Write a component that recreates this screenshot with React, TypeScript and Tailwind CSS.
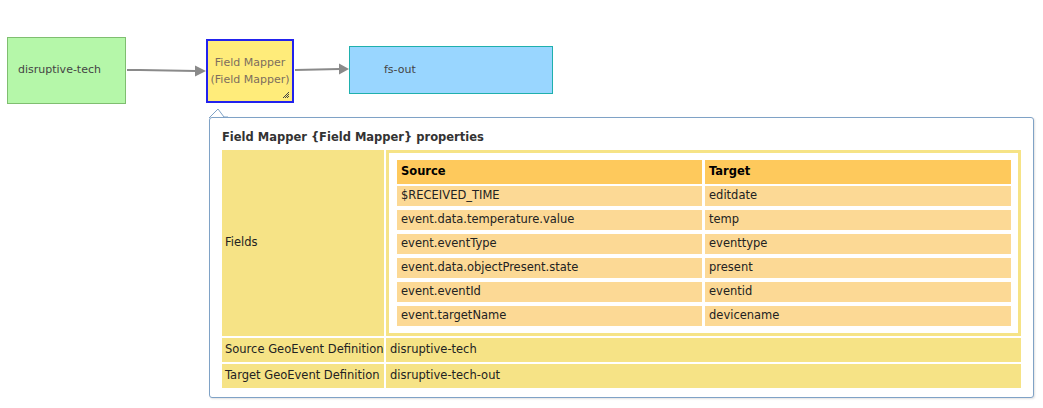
import React from "react";

const rows: [string, string][] = [
  ["$RECEIVED_TIME", "editdate"],
  ["event.data.temperature.value", "temp"],
  ["event.eventType", "eventtype"],
  ["event.data.objectPresent.state", "present"],
  ["event.eventId", "eventid"],
  ["event.targetName", "devicename"],
];

export default function App() {
  return (
    <div
      className="relative w-[1043px] h-[408px] bg-white overflow-hidden text-[11px] text-[#222]"
      style={{ fontFamily: '"DejaVu Sans", Verdana, sans-serif' }}
    >
      {/* arrows */}
      <svg className="absolute left-0 top-0" width="1043" height="408">
        <path d="M127 70 L140 70 L196 71" stroke="#8a8a8a" strokeWidth="2" fill="none" />
        <polygon points="195,65.5 206,71 195,76.5" fill="#8a8a8a" />
        <path d="M295 70 L340 69" stroke="#8a8a8a" strokeWidth="2" fill="none" />
        <polygon points="339,63.5 349,69 339,74.5" fill="#8a8a8a" />
      </svg>

      {/* node: disruptive-tech */}
      <div className="absolute left-[7px] top-[37px] w-[119px] h-[67px] bg-[#b5f7a9] border border-[#7fbe70] flex items-center pl-[10px] text-[#444]">
        disruptive-tech
      </div>

      {/* node: Field Mapper */}
      <div className="absolute left-[206px] top-[39px] w-[88px] h-[64px] bg-[#ffec7a] border-2 border-[#2222ee] flex flex-col items-center justify-center leading-[17px] text-[#7d6e5e]">
        <span>Field Mapper</span>
        <span>(Field Mapper)</span>
        <svg className="absolute right-[2px] bottom-[2px]" width="8" height="8" viewBox="0 0 8 8">
          <path d="M1 7 L7 1 M3 7 L7 3 M5 7 L7 5" stroke="#444" strokeWidth="1" />
        </svg>
      </div>

      {/* node: fs-out */}
      <div className="absolute left-[349px] top-[46px] w-[204px] h-[48px] bg-[#99d6ff] border border-[#1fb0ad] flex items-center pl-[34px] text-[#444]">
        fs-out
      </div>

      {/* popup pointer */}
      <svg className="absolute left-[205px] top-[106px]" width="24" height="14">
        <polygon points="4,13 13,3 19,11 23,11 23,14 4,14" fill="white" />
        <path d="M4 12 L13 3 L19 11 L23 11" stroke="#7fa2c6" strokeWidth="1" fill="none" />
      </svg>

      {/* popup */}
      <div className="absolute left-[209px] top-[117px] w-[825px] h-[281px] border border-[#7fa2c6] rounded-[3px] bg-white px-[12px] pt-[12px] text-[11.5px] shadow-[1px_1px_2px_rgba(0,0,0,0.12)]">
        <div className="font-bold text-[#333] leading-[14px] h-[20px]">
          Field Mapper {"{Field Mapper}"} properties
        </div>
        <div className="grid grid-cols-[162px_635px] gap-[2px]">
          <div className="bg-[#f6e386] flex items-center pl-[3px]">Fields</div>
          <div className="bg-[#f6e386] p-[3px]">
            <div className="bg-white pl-[8px] pr-[6px] pt-[7px] pb-[7px] flex flex-col">
              <div className="grid grid-cols-[305px_306px] gap-x-[3px]">
                <div className="bg-[#fec95c] h-[24px] flex items-center pl-[4px] font-bold text-black">Source</div>
                <div className="bg-[#fec95c] h-[24px] flex items-center pl-[4px] font-bold text-black">Target</div>
              </div>
              <div className="grid grid-cols-[305px_306px] gap-x-[3px] gap-y-[4px] mt-[2px]">
                {rows.map(([s, t]) => (
                  <React.Fragment key={s}>
                    <div className="bg-[#fcd995] h-[20px] flex items-center pl-[4px]">{s}</div>
                    <div className="bg-[#fcd995] h-[20px] flex items-center pl-[4px]">{t}</div>
                  </React.Fragment>
                ))}
              </div>
            </div>
          </div>
          <div className="bg-[#f6e386] h-[24px] flex items-center pl-[3px] whitespace-nowrap">Source GeoEvent Definition</div>
          <div className="bg-[#f6e386] h-[24px] flex items-center pl-[4px]">disruptive-tech</div>
          <div className="bg-[#f6e386] h-[24px] flex items-center pl-[3px] whitespace-nowrap">Target GeoEvent Definition</div>
          <div className="bg-[#f6e386] h-[24px] flex items-center pl-[4px]">disruptive-tech-out</div>
        </div>
      </div>
    </div>
  );
}
